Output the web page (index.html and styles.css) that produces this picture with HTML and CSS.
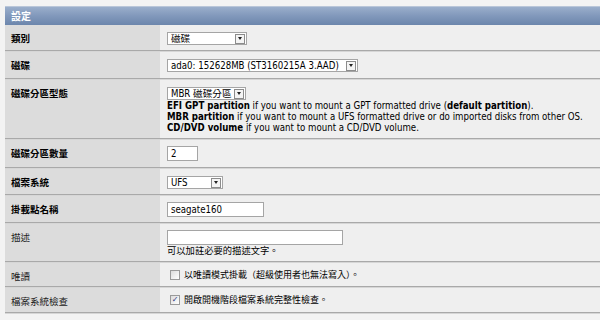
FILE: index.html
```html
<!DOCTYPE html>
<html lang="zh-Hant">

<head>
    <meta charset="UTF-8">
    <title>設定</title>
    <link rel="stylesheet" href="styles.css">
</head>

<body>
    <!-- Volume settings panel -->
    <div id="panel">
        <div class="panel-title">設定</div>

        <div class="row">
            <div class="label bold">類別</div>
            <div class="value">
                <span class="select w-type"><span class="select-text">磁碟</span><span class="select-btn"></span></span>
            </div>
        </div>

        <div class="row tall">
            <div class="label bold">磁碟</div>
            <div class="value">
                <span class="select w-disk"><span class="select-text">ada0: 152628MB (ST3160215A 3.AAD)</span><span class="select-btn"></span></span>
            </div>
        </div>

        <div class="row">
            <div class="label bold">磁碟分區型態</div>
            <div class="value">
                <span class="select w-part"><span class="select-text">MBR 磁碟分區</span><span class="select-btn"></span></span>
                <div class="help">
                    <b>EFI GPT partition</b> if you want to mount a GPT formatted drive (<b>default partition</b>).<br>
                    <b>MBR partition</b> if you want to mount a UFS formatted drive or do imported disks from other OS.<br>
                    <b>CD/DVD volume</b> if you want to mount a CD/DVD volume.
                </div>
            </div>
        </div>

        <div class="row tall">
            <div class="label bold">磁碟分區數量</div>
            <div class="value">
                <input class="text w-num" type="text" value="2">
            </div>
        </div>

        <div class="row">
            <div class="label bold">檔案系統</div>
            <div class="value">
                <span class="select w-fs"><span class="select-text">UFS</span><span class="select-btn"></span></span>
            </div>
        </div>

        <div class="row">
            <div class="label bold">掛載點名稱</div>
            <div class="value">
                <input class="text w-mount" type="text" value="seagate160">
            </div>
        </div>

        <div class="row">
            <div class="label">描述</div>
            <div class="value">
                <input class="text w-desc" type="text" value="">
                <div class="note">可以加註必要的描述文字。</div>
            </div>
        </div>

        <div class="row">
            <div class="label">唯讀</div>
            <div class="value">
                <span class="check"><span class="box"></span>以唯讀模式掛載（超級使用者也無法寫入）。</span>
            </div>
        </div>

        <div class="row tall">
            <div class="label">檔案系統檢查</div>
            <div class="value">
                <span class="check"><span class="box">✓</span>開啟開機階段檔案系統完整性檢查。</span>
            </div>
        </div>
    </div>
</body>

</html>
```

FILE: styles.css
```css
body {
    margin: 0px;
    padding: 0px;
    background: #f3f3f3;
    font-family: "DejaVu Sans Condensed", "Noto Sans CJK TC", sans-serif;
    font-size: 9.6px;
    color: #000;
}

#panel {
    padding: 6px 0 0 5px;
}

.panel-title {
    height: 19px;
    padding-left: 6px;
    line-height: 18px;
    color: #fff;
    font-weight: bold;
    font-size: 10px;
    font-family: "Noto Sans CJK TC", sans-serif;
    background: linear-gradient(#9aaecb, #8198bb 50%, #6c86ac);
    border-top: 1px solid #b9c6d9;
    box-sizing: border-box;
}

.row {
    display: grid;
    grid-template-columns: 155px 1fr;
    border-bottom: 1px solid #a9a9a9;
    box-shadow: 0 1px 0 #d6d6d6;
    margin-bottom: 1px;
}

.label {
    background: #dcdcdc;
    padding: 7px 6px 4px;
    font-family: "Noto Sans CJK TC", sans-serif;
    font-size: 9.5px;
    line-height: 12px;
    color: #222;
}

.label.bold {
    font-weight: bold;
    color: #000;
}

.value {
    background: #efefef;
    padding: 6px 7px 5px;
}

.row.tall .value {
    padding-bottom: 6px;
}

.select {
    display: inline-flex;
    align-items: center;
    height: 13px;
    margin-top: 1px;
    background: #fff;
    border: 1px solid #a5a5a5;
    box-sizing: border-box;
    vertical-align: top;
}

.select-text {
    flex: 1;
    padding-left: 3px;
    font-size: 9.6px;
    line-height: 11px;
    white-space: nowrap;
    overflow: hidden;
}

.select-btn {
    width: 8px;
    height: 8px;
    margin: 0 1px 0 2px;
    border: 1px solid #8c8c8c;
    background: #f4f4f4;
    display: flex;
    align-items: center;
    justify-content: center;
}

.select-btn::after {
    content: "";
    border-left: 2.5px solid transparent;
    border-right: 2.5px solid transparent;
    border-top: 3px solid #222;
}

.w-type { width: 80px; }
.w-disk { width: 191px; }
.w-part { width: 79px; }
.w-fs { width: 56px; }

.help {
    line-height: 11px;
    white-space: nowrap;
}

.text {
    display: block;
    height: 15px;
    padding: 0 3px;
    border: 1px solid #a5a5a5;
    background: #fff;
    font-family: "DejaVu Sans Condensed", sans-serif;
    font-size: 9.6px;
    box-sizing: border-box;
    margin: 0;
}

.w-num { width: 31px; }
.w-mount { width: 97px; }
.w-desc { width: 176px; }

.note {
    font-family: "Noto Sans CJK TC", sans-serif;
    font-size: 9.3px;
    line-height: 11px;
}

.check {
    display: flex;
    align-items: center;
    gap: 4px;
    padding-left: 3px;
    font-family: "Noto Sans CJK TC", sans-serif;
    font-size: 9px;
    line-height: 12px;
}

.box {
    width: 8px;
    height: 8px;
    border: 1px solid #9a9a9a;
    background: linear-gradient(135deg, #dcdcdc, #fff);
    font-size: 8px;
    line-height: 8px;
    text-align: center;
    color: #2b3a80;
    font-weight: bold;
    font-family: "DejaVu Sans", sans-serif;
}
```
